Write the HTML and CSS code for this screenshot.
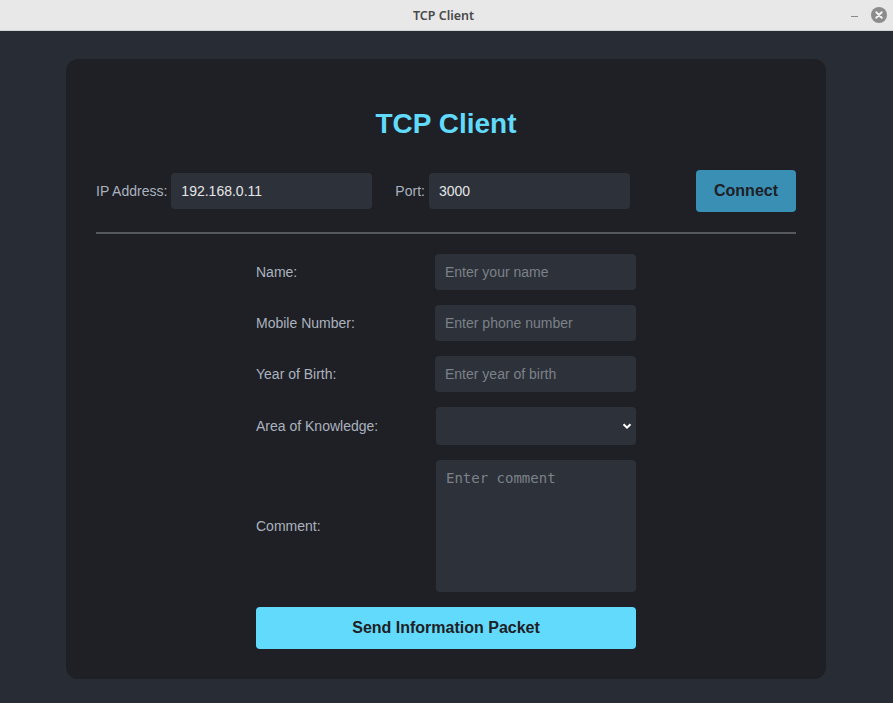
FILE: index.html
```html
<!DOCTYPE html>
<html>
<head>
<meta charset="utf-8">
<title>TCP Client</title>
<link rel="stylesheet" href="styles.css">
</head>
<body>
<div class="titlebar">
  <span class="titlebar-title">TCP Client</span>
  <div class="titlebar-controls">
    <span class="tb-min"></span>
    <span class="tb-close">
      <svg width="16" height="16" viewBox="0 0 16 16"><circle cx="8" cy="8" r="8" fill="#8c8c8c"/><path d="M5.3 5.3 L10.7 10.7 M10.7 5.3 L5.3 10.7" stroke="#f2f2f2" stroke-width="2" stroke-linecap="round"/></svg>
    </span>
  </div>
</div>
<main class="page">
  <section class="card">
    <h1 class="heading">TCP Client</h1>
    <div class="conn-row">
      <label class="conn-label">IP Address:</label>
      <input class="field conn-input" type="text" value="192.168.0.11">
      <label class="conn-label port-label">Port:</label>
      <input class="field conn-input" type="text" value="3000">
      <button class="connect-btn">Connect</button>
    </div>
    <hr class="divider">
    <form class="info-form">
      <label class="form-label">Name:</label>
      <input class="field form-input" type="text" placeholder="Enter your name">
      <label class="form-label">Mobile Number:</label>
      <input class="field form-input" type="text" placeholder="Enter phone number">
      <label class="form-label">Year of Birth:</label>
      <input class="field form-input" type="text" placeholder="Enter year of birth">
      <label class="form-label">Area of Knowledge:</label>
      <div class="select-wrap">
        <select class="field form-select"><option></option></select>
        <svg class="chevron" width="10" height="8" viewBox="0 0 10 8"><path d="M1.5 2.2 L5 5.6 L8.5 2.2" fill="none" stroke="#ffffff" stroke-width="2"/></svg>
      </div>
      <label class="form-label">Comment:</label>
      <textarea class="field form-textarea" placeholder="Enter comment"></textarea>
      <button type="button" class="send-btn">Send Information Packet</button>
    </form>
  </section>
</main>
</body>
</html>
```
FILE: styles.css
```css
* { box-sizing: border-box; }
html, body {
  margin: 0;
  padding: 0;
  background: #282c34;
  font-family: "Liberation Sans", Arial, sans-serif;
}
.titlebar {
  height: 31px;
  background: #e8e8e8;
  border-bottom: 1px solid #d2d2d2;
  display: flex;
  align-items: center;
  justify-content: center;
  position: relative;
}
.titlebar-title {
  font-family: "Noto Sans", "DejaVu Sans", sans-serif;
  font-weight: 600;
  font-size: 12.5px;
  color: #4a4a4a;
  margin-right: 6px;
}
.titlebar-controls {
  position: absolute;
  right: 6px;
  top: 7px;
  display: flex;
  align-items: center;
  gap: 13px;
}
.tb-min {
  width: 7px;
  height: 1px;
  background: #8a8a8a;
  margin-top: 3px;
}
.tb-close { display: flex; }
.page {
  padding: 28px 1px 24px 0;
  display: flex;
  justify-content: center;
}
.card {
  width: 760px;
  height: 620px;
  background: #1e2025;
  border-radius: 12px;
  padding: 30px;
}
.heading {
  margin: 19px 0 30px;
  text-align: center;
  font-size: 28px;
  line-height: 32px;
  font-weight: bold;
  color: #61dafb;
}
.conn-row {
  display: flex;
  align-items: center;
  height: 42px;
}
.conn-label {
  font-size: 14px;
  color: #abb2bf;
  margin-right: 4px;
}
.port-label { margin-left: 23px; }
.field {
  background: #2c313a;
  border: none;
  border-radius: 4px;
  color: #e6e6e6;
  font-family: "Liberation Sans", Arial, sans-serif;
  font-size: 14px;
  outline: none;
}
.field::placeholder { color: #7d8188; }
.conn-input {
  width: 201px;
  height: 36px;
  padding: 0 10px;
}
.connect-btn {
  margin-left: auto;
  width: 100px;
  height: 42px;
  background: #3a8fb5;
  border: none;
  border-radius: 4px;
  color: #1e2025;
  font-family: "Liberation Sans", Arial, sans-serif;
  font-weight: bold;
  font-size: 16px;
}
.divider {
  margin: 20px 0 20px;
  border: none;
  border-top: 2px solid #55585d;
  height: 0;
}
.info-form {
  width: 380px;
  margin: 0 auto;
  display: grid;
  grid-template-columns: 1fr 201px;
  row-gap: 15px;
  align-items: center;
}
.form-label {
  font-size: 14px;
  color: #abb2bf;
}
.form-input {
  height: 36px;
  padding: 0 10px;
}
.select-wrap {
  position: relative;
  margin-left: 1px;
  height: 38px;
}
.form-select {
  appearance: none;
  -webkit-appearance: none;
  width: 100%;
  height: 38px;
  padding: 0 10px;
}
.chevron {
  position: absolute;
  right: 4px;
  top: 15px;
}
.form-textarea {
  margin-left: 1px;
  height: 132px;
  padding: 10px;
  resize: none;
  font-family: "DejaVu Sans Mono", monospace;
  font-size: 14px;
}
.send-btn {
  grid-column: 1 / 3;
  height: 42px;
  background: #61dafb;
  border: none;
  border-radius: 4px;
  color: #1e2025;
  font-family: "Liberation Sans", Arial, sans-serif;
  font-weight: bold;
  font-size: 16px;
}
```
